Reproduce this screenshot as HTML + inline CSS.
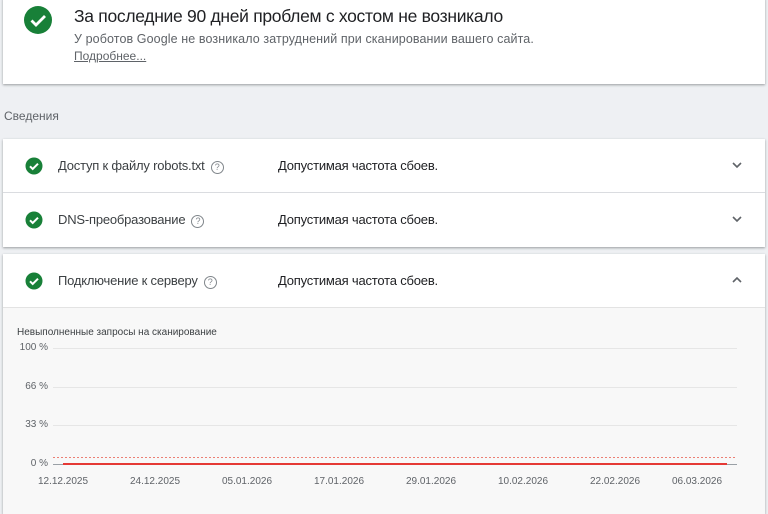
<!DOCTYPE html>
<html><head><meta charset="utf-8"><style>
*{margin:0;padding:0;box-sizing:border-box}
body{width:768px;height:499px;overflow:hidden;background:#eef0f3;font-family:"Liberation Sans",sans-serif;position:relative;color:#202124}
.card{position:absolute;left:3px;right:3px;background:#fff;box-shadow:0 1px 2px rgba(60,64,67,.35),0 1px 3px rgba(60,64,67,.15)}
.abs{position:absolute;white-space:nowrap}
.row{position:absolute;left:0;right:0;height:54px}
.row .ic{position:absolute;left:22px;top:18px}
.row .t{position:absolute;left:55px;top:19px;font-size:13px;color:#3c4043;letter-spacing:-0.2px}
.row .v{position:absolute;left:275px;top:19px;font-size:13px;color:#202124;letter-spacing:-0.2px}
.row .ch{position:absolute;right:22px;top:20px}
.q{display:inline-block;width:13px;height:13px;border:1px solid #80868b;border-radius:50%;font-size:9px;line-height:11px;text-align:center;color:#80868b;margin-left:6px;vertical-align:0px}
.yl{position:absolute;right:720px;font-size:10px;color:#5f6368}
.xl{position:absolute;top:476px;font-size:10px;color:#5f6368;transform:translateX(-50%)}
.g{position:absolute;left:53px;width:684px;height:1px;background:#e6e6e6}
</style></head><body>
<div class="card" style="top:-2px;height:86px">
 <svg class="abs" style="left:20px;top:7px" width="30" height="30" viewBox="0 0 30 30"><circle cx="15" cy="15" r="14" fill="#188038"/><path d="M8.5 15.5l4.5 4.5 9-9" stroke="#fff" stroke-width="2.8" fill="none"/></svg>
 <div class="abs" style="left:71px;top:8px;font-size:17.5px;letter-spacing:-0.3px;color:#202124">За последние 90 дней проблем с хостом не возникало</div>
 <div class="abs" style="left:71px;top:34px;font-size:12.5px;color:#5f6368;letter-spacing:0.1px">У роботов Google не возникало затруднений при сканировании вашего сайта.</div>
 <div class="abs" style="left:71px;top:51px;font-size:12px;color:#5f6368;text-decoration:underline">Подробнее...</div>
</div>
<div class="abs" style="left:4px;top:109px;font-size:12px;color:#5f6368">Сведения</div>
<div class="card" style="top:139px;height:108px">
 <div class="row" style="top:0;border-bottom:1px solid #dadce0">
  <svg class="ic" width="18" height="18" viewBox="0 0 18 18"><circle cx="9" cy="9" r="8.5" fill="#188038"/><path d="M5 9.3l2.7 2.7 5.3-5.3" stroke="#fff" stroke-width="2" fill="none"/></svg>
  <div class="t">Доступ к файлу robots.txt<span class="q">?</span></div>
  <div class="v">Допустимая частота сбоев.</div>
  <svg class="ch" width="12" height="12" viewBox="0 0 12 12"><path d="M2 4l4 4 4-4" stroke="#5f6368" stroke-width="1.6" fill="none"/></svg>
 </div>
 <div class="row" style="top:54px">
  <svg class="ic" width="18" height="18" viewBox="0 0 18 18"><circle cx="9" cy="9" r="8.5" fill="#188038"/><path d="M5 9.3l2.7 2.7 5.3-5.3" stroke="#fff" stroke-width="2" fill="none"/></svg>
  <div class="t">DNS-преобразование<span class="q">?</span></div>
  <div class="v">Допустимая частота сбоев.</div>
  <svg class="ch" width="12" height="12" viewBox="0 0 12 12"><path d="M2 4l4 4 4-4" stroke="#5f6368" stroke-width="1.6" fill="none"/></svg>
 </div>
</div>
<div class="card" style="top:254px;height:260px;background:#f8f8f8">
 <div class="row" style="top:0;background:#fff;border-bottom:1px solid #e3e3e3">
  <svg class="ic" width="18" height="18" viewBox="0 0 18 18"><circle cx="9" cy="9" r="8.5" fill="#188038"/><path d="M5 9.3l2.7 2.7 5.3-5.3" stroke="#fff" stroke-width="2" fill="none"/></svg>
  <div class="t">Подключение к серверу<span class="q">?</span></div>
  <div class="v">Допустимая частота сбоев.</div>
  <svg class="ch" width="12" height="12" viewBox="0 0 12 12"><path d="M2 8l4-4 4 4" stroke="#5f6368" stroke-width="1.6" fill="none"/></svg>
 </div>
</div>
<div class="abs" style="left:17px;top:327px;font-size:10px;color:#3c4043">Невыполненные запросы на сканирование</div>
<div class="yl" style="top:342px">100 %</div>
<div class="yl" style="top:381px">66 %</div>
<div class="yl" style="top:419px">33 %</div>
<div class="yl" style="top:458px">0 %</div>
<div class="g" style="top:348px"></div>
<div class="g" style="top:387px"></div>
<div class="g" style="top:425px"></div>
<div class="abs" style="left:53px;top:457px;width:684px;height:1px;background:repeating-linear-gradient(90deg,#ec7f74 0 2px,transparent 2px 4px)"></div>
<div class="g" style="top:464px;background:#9aa0a6"></div>
<div class="abs" style="left:63px;top:463px;width:664px;height:2px;background:#e53935"></div>
<div class="xl" style="left:63px">12.12.2025</div>
<div class="xl" style="left:155px">24.12.2025</div>
<div class="xl" style="left:247px">05.01.2026</div>
<div class="xl" style="left:339px">17.01.2026</div>
<div class="xl" style="left:431px">29.01.2026</div>
<div class="xl" style="left:523px">10.02.2026</div>
<div class="xl" style="left:615px">22.02.2026</div>
<div class="xl" style="left:697px">06.03.2026</div>
</body></html>
